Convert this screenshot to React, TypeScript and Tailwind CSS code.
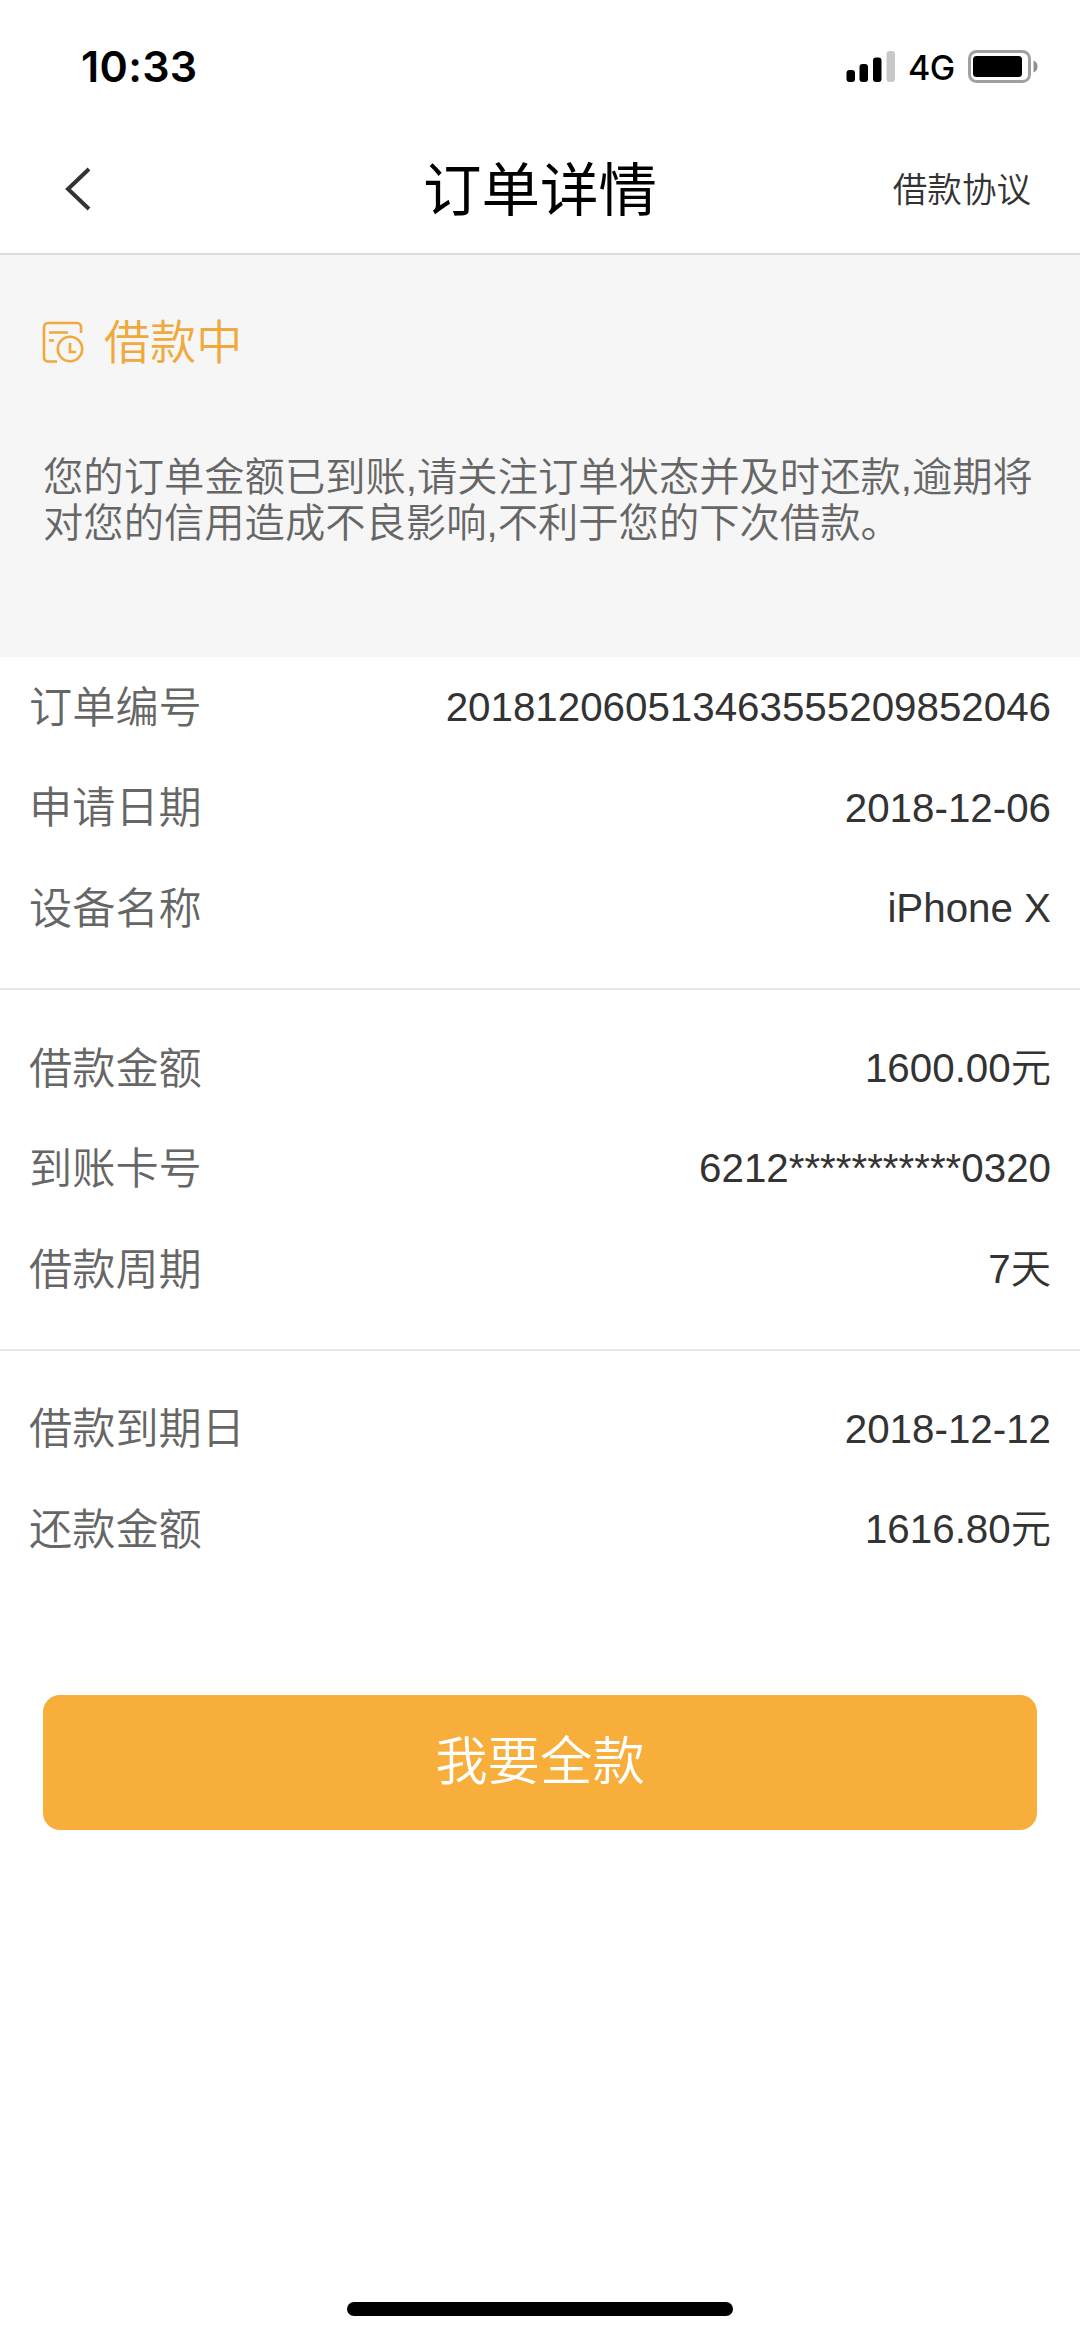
import { Fragment } from 'react';

interface DetailRow {
    label: string;
    value: string;
}

const sections: DetailRow[][] = [
    [
        { label: '订单编号', value: '201812060513463555209852046' },
        { label: '申请日期', value: '2018-12-06' },
        { label: '设备名称', value: 'iPhone X' },
    ],
    [
        { label: '借款金额', value: '1600.00元' },
        { label: '到账卡号', value: '6212***********0320' },
        { label: '借款周期', value: '7天' },
    ],
    [
        { label: '借款到期日', value: '2018-12-12' },
        { label: '还款金额', value: '1616.80元' },
    ],
];

function StatusBar() {
    return (
        <div className="h-[126px] pl-[81px] pr-[41px] pt-[40px] flex items-start justify-between text-black font-['Inter',sans-serif]">
            <span className="text-[43px] leading-[52px] font-semibold tracking-[0.3px]">10:33</span>
            <div className="flex items-start">
                <svg className="mt-[10px] w-[50px] h-[33px]" viewBox="0 0 50 33">
                    <rect x="0.5" y="20" width="8.5" height="12" rx="3" />
                    <rect x="13.5" y="14" width="8.5" height="18" rx="3" />
                    <rect x="27" y="7.5" width="8.5" height="24.5" rx="3" />
                    <rect x="40.5" y="1" width="8.5" height="31" rx="3" fill="#c8c8c8" />
                </svg>
                <span className="ml-[12px] mt-[6px] w-[48px] text-[34px] leading-[44px] font-medium tracking-[-0.5px]">4G</span>
                <svg className="ml-[12px] mt-[10px] w-[71px] h-[33px]" viewBox="0 0 71 33">
                    <rect x="1.5" y="1.5" width="60" height="30" rx="7" fill="none" stroke="#a0a0a0" strokeWidth="3" />
                    <rect x="5" y="6" width="49" height="21" rx="3.5" />
                    <path d="M65.5 10.5a6.5 6.5 0 0 1 0 12z" fill="#8f8f8f" />
                </svg>
            </div>
        </div>
    );
}

function Header() {
    return (
        <header className="h-[129px] px-[48px] border-b-2 border-[#dadcda] grid grid-cols-3 items-center">
            <svg className="ml-[14px] w-[32px] h-[48px]" viewBox="0 0 32 48" fill="none" stroke="#333" strokeWidth="4">
                <path d="M27 3 6 23l21 20" />
            </svg>
            <h1 className="pt-[2px] text-[58.5px] leading-[80px] text-black text-center whitespace-nowrap">订单详情</h1>
            <span className="pr-[1px] text-[34.56px] leading-[48px] font-[350] text-[#333] text-right">借款协议</span>
        </header>
    );
}

function LoanIcon() {
    return (
        <svg className="-ml-[1px] w-[42px] h-[42px]" viewBox="0 0 42 42" fill="none" stroke="#f0a93c" strokeWidth="2.6">
            <path d="M15 40.5H6a4 4 0 0 1-4-4V6a4 4 0 0 1 4-4h29a4 4 0 0 1 4 4v6" />
            <path d="M7 11.5h19M7 19.5h5" />
            <circle cx="28" cy="28" r="12.2" />
            <path d="M28 22v9h6" />
        </svg>
    );
}

export default function App() {
    return (
        <div className="w-[1080px] h-[2339px] bg-white flex flex-col overflow-hidden font-['Liberation_Sans','Noto_Sans_CJK_SC',sans-serif]">
            <StatusBar />
            <Header />

            {/* Loan status */}
            <section className="h-[402px] bg-[#f6f6f6] px-[43px] pt-[55px]">
                <div className="h-[64px] flex items-center gap-[20px]">
                    <LoanIcon />
                    <span className="pt-[2px] text-[46.08px] leading-[64px] font-[350] text-[#f0a93c]">借款中</span>
                </div>
                <p className="mt-[80px] text-[40.32px] leading-[46px] font-[350] text-[#666]">
                    您的订单金额已到账,请关注订单状态并及时还款,逾期将
                    <br />
                    对您的信用造成不良影响,不利于您的下次借款。
                </p>
            </section>

            {/* Order details */}
            {sections.map((rows, idx) => (
                <Fragment key={idx}>
                    {idx > 0 && <hr className="mt-[29px] mb-[28px] border-t-2 border-[#e8e8e8]" />}
                    <dl>
                        {rows.map((row) => (
                            <div key={row.label} className="h-[100.6px] px-[29px] flex items-center justify-between">
                                <dt className="pt-[2px] text-[43.2px] font-[350] text-[#666]">{row.label}</dt>
                                <dd className="text-[40.32px] font-[350] text-[#333]">{row.value}</dd>
                            </div>
                        ))}
                    </dl>
                </Fragment>
            ))}

            <button className="mt-[115px] mx-[43px] h-[135px] rounded-[17px] bg-[#f7ae3b] text-[52.4px] font-[350] text-white">
                我要全款
            </button>

            <div className="mt-auto mb-[23px] mx-auto w-[386px] h-[14px] rounded-full bg-black" />
        </div>
    );
}
